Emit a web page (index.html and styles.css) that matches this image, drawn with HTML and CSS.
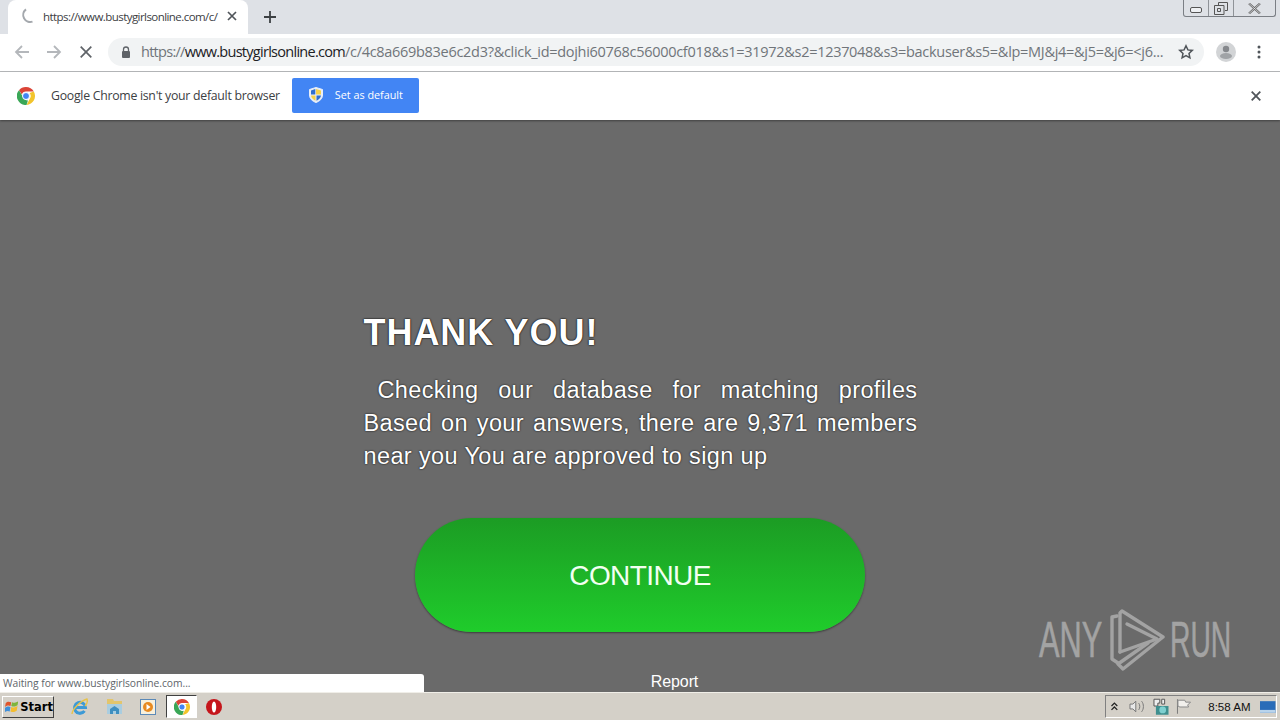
FILE: index.html
```html
<!DOCTYPE html>
<html lang="en">
<head>
<meta charset="utf-8">
<title>Thank you</title>
<link rel="stylesheet" href="styles.css">
</head>
<body>
<div class="screen">
  <header class="tabstrip">
    <div class="tab">
      <svg class="spinner" width="16" height="16" viewBox="0 0 16 16"><path d="M12.5 13.6A7 7 0 0 1 6 1.4" fill="none" stroke="#a4a8ad" stroke-width="2"/></svg>
      <span class="tab-title">https://www.bustygirlsonline.com/c/</span>
      <svg class="tab-close" width="10" height="10" viewBox="0 0 10 10"><path d="M1 1l8 8M9 1l-8 8" stroke="#50555a" stroke-width="1.7"/></svg>
    </div>
    <svg class="new-tab" width="12" height="12" viewBox="0 0 12 12"><path d="M6 0v12M0 6h12" stroke="#3c4043" stroke-width="1.8"/></svg>
    <div class="win-buttons">
      <span class="win-btn win-min"><svg width="12" height="6" viewBox="0 0 12 6"><rect x="0.5" y="0.5" width="11" height="5" rx="1.5" fill="#eef0f3" stroke="#555"/></svg></span>
      <span class="win-btn win-max"><svg width="14" height="13" viewBox="0 0 14 13"><path d="M4.5 3V.5h9v8H11M.5 3.500h9.500v9H.5zM3.500 6.500h3v3h-3z" fill="none" stroke="#555"/></svg></span>
      <span class="win-btn win-close"><svg width="13" height="11" viewBox="0 0 13 11"><path d="M1 .5l11 10M12 .5l-11 10" stroke="#666" stroke-width="2.200"/><path d="M1 .5l11 10M12 .5l-11 10" stroke="#eef0f3" stroke-width=".7"/></svg></span>
    </div>
  </header>

  <nav class="toolbar">
    <svg class="nav-icon nav-back" width="16" height="14" viewBox="0 0 16 14"><path d="M15 7H2M8 1L2 7l6 6" fill="none" stroke="#b4b7bb" stroke-width="1.800"/></svg>
    <svg class="nav-icon nav-fwd" width="16" height="14" viewBox="0 0 16 14"><path d="M1 7h13M8 1l6 6-6 6" fill="none" stroke="#b4b7bb" stroke-width="1.800"/></svg>
    <svg class="nav-icon nav-stop" width="12" height="12" viewBox="0 0 12 12"><path d="M.7.700l10.600 10.600M11.300.700L.7 11.300" stroke="#5f6368" stroke-width="1.700"/></svg>
    <div class="omnibox">
      <svg class="lock" width="10" height="12" viewBox="0 0 10 12"><path d="M2.500 5V3.500a2.500 2.500 0 0 1 5 0V5" fill="none" stroke="#5f6368" stroke-width="1.300"/><rect x="1" y="5" width="8" height="7" rx="1" fill="#5f6368"/></svg>
      <span class="url"><span class="url-scheme">https://</span><span class="url-host">www.bustygirlsonline.com</span><span class="url-dim">/c/4c8a669b83e6c2d3?&amp;click_id=dojhi60768c56000cf018&amp;s1=31972&amp;s2=1237048&amp;s3=backuser&amp;s5=&amp;lp=MJ&amp;j4=&amp;j5=&amp;j6=&lt;j6...</span></span>
      <svg class="star" width="16" height="16" viewBox="0 0 16 16"><path d="M8 1.800l1.900 4.100 4.400.5-3.300 3 .9 4.400L8 11.600l-3.900 2.200.9-4.400-3.300-3 4.400-.5z" fill="none" stroke="#50555a" stroke-width="1.500"/></svg>
    </div>
    <svg class="avatar" width="20" height="20" viewBox="0 0 20 20"><circle cx="10" cy="10" r="10" fill="#d2d4d6"/><circle cx="10" cy="7" r="3.200" fill="#85888c"/><ellipse cx="10" cy="14" rx="6" ry="3" fill="#a0a3a6"/></svg>
    <svg class="menu" width="4" height="14" viewBox="0 0 4 14"><circle cx="2" cy="2" r="1.500" fill="#50555a"/><circle cx="2" cy="7" r="1.500" fill="#50555a"/><circle cx="2" cy="12" r="1.500" fill="#50555a"/></svg>
  </nav>

  <section class="infobar">
    <svg class="chrome-logo" width="18" height="18" viewBox="0 0 18 18">
      <path d="M9 0a9 9 0 0 1 7.800 4.500H9a4.500 4.500 0 0 0-4.200 3L2 3.200A9 9 0 0 1 9 0z" fill="#db4437"/>
      <path d="M16.800 4.500A9 9 0 0 1 9.500 18l3.400-6.500A4.500 4.500 0 0 0 12.500 6z" fill="#f2c42c"/>
      <path d="M2 3.200l3.800 6.600A4.500 4.500 0 0 0 11 13.300L9.500 18A9 9 0 0 1 2 3.200z" fill="#3aa757"/>
      <circle cx="9" cy="9" r="3.500" fill="#4285f4" stroke="#fff" stroke-width="1"/>
    </svg>
    <span class="info-text">Google Chrome isn't your default browser</span>
    <button class="default-btn">
      <svg width="14" height="16" viewBox="0 0 14 16"><path d="M7 .5l6.500 2V8c0 3.500-2.500 6-6.500 7.500C3 14 .5 11.500.5 8V2.500z" fill="#e8eef8" stroke="#e8eef8"/><path d="M7 2v5.500h5V3.500z" fill="#f6d24a"/><path d="M2 8.500h4.500v5.200C4 12.500 2.300 11 2 8.500z" fill="#f6d24a"/><path d="M6.300 2L2 3.500v4h4.300z" fill="#2f6fd0"/><path d="M7.500 8.500H12c-.3 2.500-2 4-4.500 5.200z" fill="#2f6fd0"/></svg>
      <span>Set as default</span>
    </button>
    <svg class="info-close" width="10" height="10" viewBox="0 0 10 10"><path d="M.7.700l8.600 8.600M9.300.700L.7 9.300" stroke="#50555a" stroke-width="1.800"/></svg>
  </section>

  <main class="page">
    <div class="copy">
      <h1 class="title">THANK YOU!</h1>
      <p class="lead">Checking our database for matching profiles Based on your answers, there are 9,371 members near you You are approved to sign up</p>
    </div>
    <a class="cta">CONTINUE</a>
    <a class="report">Report</a>

    <div class="status">Waiting for www.bustygirlsonline.com...</div>
    <div class="watermark">
      <span class="wm-any">ANY</span>
      <svg width="55" height="62" viewBox="5 5 55 62" fill="none" stroke="#a3a3a3" stroke-width="3.400" stroke-linejoin="round" stroke-linecap="round">
        <path d="M12 12L7 13V55L13 59"/>
        <path d="M15 48V9L17 7L58 33L18 65L13 60L43 39"/>
        <path d="M22 20L52 35L15 48"/>
      </svg>
      <span class="wm-run">RUN</span>
    </div>
  </main>

  <footer class="taskbar">
    <button class="start">
      <svg width="17" height="15" viewBox="0 0 17 15"><path d="M1 3C3 1 5 1 8 2L7 7C5 6 3 6 0 8z" fill="#e0552b"/><path d="M9 2c3 1 5 1 8-1l-1 5c-3 2-5 2-8 1z" fill="#7fb53b"/><path d="M0 9c3-2 5-2 7-1l-1 6c-2-1-4-1-7 1z" fill="#3f8fd9"/><path d="M8 8c3 1 5 1 8-1l-1 6c-3 2-5 2-8 1z" fill="#f4bd2f"/></svg>
      <span>Start</span>
    </button>
    <div class="quick">
      <svg class="q-ie" width="18" height="18" viewBox="0 0 18 18"><path d="M4 9.500h10.500A5.500 5.500 0 1 0 13.500 13" fill="none" stroke="#3d9ad6" stroke-width="3"/><path d="M4.500 13c1 2.500 5 3 8.500.5" fill="none" stroke="#3d9ad6" stroke-width="2.500"/><path d="M1 16C1 12 9 3 16 1c1 3-1 6-2 7" fill="none" stroke="#e8c34a" stroke-width="1.400"/></svg>
      <svg class="q-folder" width="17" height="17" viewBox="0 0 17 17"><path d="M1 1h6l1 2h8v13H1z" fill="#e3c56c"/><path d="M1 6h15v10H1z" fill="#a9cde0"/><path d="M4 16v-5l4.500-3 4.500 3v5h-3v-3H7v3z" fill="#3f8fc0"/></svg>
      <svg class="q-media" width="16" height="16" viewBox="0 0 16 16"><rect x=".5" y=".5" width="15" height="15" fill="#f8f0dc" stroke="#5b89b8"/><circle cx="8" cy="8" r="5" fill="#e88a20"/><path d="M6.500 5l4 3-4 3z" fill="#fff"/></svg>
      <span class="q-active"><svg width="16" height="16" viewBox="0 0 18 18">
        <path d="M9 0a9 9 0 0 1 7.800 4.500H9a4.500 4.500 0 0 0-4.200 3L2 3.200A9 9 0 0 1 9 0z" fill="#db4437"/>
        <path d="M16.800 4.500A9 9 0 0 1 9.500 18l3.400-6.500A4.500 4.500 0 0 0 12.500 6z" fill="#f2c42c"/>
        <path d="M2 3.200l3.800 6.600A4.500 4.500 0 0 0 11 13.300L9.500 18A9 9 0 0 1 2 3.200z" fill="#3aa757"/>
        <circle cx="9" cy="9" r="3.500" fill="#4285f4" stroke="#fff"/></svg></span>
      <svg class="q-opera" width="16" height="16" viewBox="0 0 16 16"><circle cx="8" cy="8" r="8" fill="#c5151b"/><ellipse cx="8" cy="8" rx="2.200" ry="5.500" fill="#fff"/></svg>
    </div>
    <div class="tray">
      <svg width="7" height="9" viewBox="0 0 7 9"><path d="M.5 4l3-3 3 3M.5 8l3-3 3 3" fill="none" stroke="#222" stroke-width="1.300"/></svg>
      <svg class="t-sound" width="16" height="15" viewBox="0 0 16 15"><path d="M1 5h3l3-3v11l-3-3H1z" fill="#e8e8e8" stroke="#777"/><path d="M10 4c1.500 2 1.500 5 0 7M13 2c2.500 3 2.500 8 0 11" fill="none" stroke="#777"/></svg>
      <svg class="t-net" width="16" height="17" viewBox="0 0 16 17"><path d="M1 1h6v4H5v3H1zM9 1h3v5H9z" fill="#eee" stroke="#555"/><rect x="3" y="8" width="13" height="9" fill="#3f8f8f"/><circle cx="10" cy="12" r="3.500" fill="#7fd0d0"/></svg>
      <svg class="t-flag" width="16" height="15" viewBox="0 0 16 15"><path d="M1.500 0v15" stroke="#777"/><path d="M2 1h7l1 2h5l-3 3 1 2H4L2 7z" fill="#f2f0ec" stroke="#888"/></svg>
      <span class="clock">8:58 AM</span>
      <svg class="t-desk" width="16" height="12" viewBox="0 0 16 12"><rect width="16" height="12" fill="#2a6cb8"/><rect y="9" width="16" height="3" fill="#b9d4ec"/></svg>
    </div>
  </footer>
</div>
</body>
</html>
```

FILE: styles.css
```css
* { box-sizing: border-box; }
html, body { margin: 0; padding: 0; }
body { font-family: "Liberation Sans", Arial, sans-serif; overflow: hidden; }

.screen { width: 1280px; height: 720px; display: flex; flex-direction: column; position: relative; overflow: hidden; }

/* tab strip */
.tabstrip { height: 34px; flex: none; background: #dee1e6; display: flex; align-items: flex-start; position: relative; }
.tab { width: 240px; height: 34px; margin-left: 8px; padding: 0 0 2px 12px; background: #fff; border-radius: 8px 8px 0 0; display: flex; align-items: center; }
.spinner { flex: none; }
.tab-title { margin-left: 7px; width: 175px; font-family: "Open Sans", "Liberation Sans", sans-serif; font-size: 11.500px; letter-spacing: -0.56px; color: #3c4043; white-space: nowrap; }
.tab-close { margin-left: 9px; flex: none; }
.new-tab { margin: 11px 0 0 16px; flex: none; }
.win-buttons { margin-left: auto; margin-right: 4px; display: flex; height: 17px; border: 1px solid #7b7f85; border-top: none; border-radius: 0 0 3px 3px; }
.win-btn { display: flex; align-items: center; justify-content: center; height: 16px; }
.win-min { width: 25px; border-right: 1px solid #8f9398; padding-top: 3px; }
.win-max { width: 25px; border-right: 1px solid #8f9398; }
.win-close { width: 41px; }

/* toolbar */
.toolbar { height: 38px; flex: none; background: #fff; border-bottom: 1px solid #b8babc; display: flex; align-items: center; padding: 0 0 2px 14px; }
.nav-back { flex: none; }
.nav-fwd { flex: none; margin-left: 16px; }
.nav-stop { flex: none; margin-left: 18px; }
.omnibox { margin-left: 16px; width: 1096px; height: 28px; background: #f1f3f4; border-radius: 14px; display: flex; align-items: center; padding-left: 13px; flex: none; }
.lock { flex: none; }
.url { margin-left: 10px; width: 1024px; flex: none; font-family: "Open Sans", "Liberation Sans", sans-serif; font-size: 14.500px; white-space: nowrap; }
.url-scheme { color: #70757a; letter-spacing: -0.72px; }
.url-dim { color: #70757a; letter-spacing: -0.295px; }
.url-host { color: #202124; letter-spacing: -0.72px; }
.star { flex: none; margin-left: 13px; }
.avatar { flex: none; margin-left: 12px; }
.menu { flex: none; margin-left: 21px; }

/* info bar */
.infobar { height: 48px; flex: none; background: #fff; display: flex; align-items: center; padding-left: 17px; position: relative; box-shadow: 0 1px 2px rgba(0,0,0,.4); z-index: 1; }
.chrome-logo { flex: none; }
.info-text { margin: 0 0 2px 16px; font-family: "Open Sans", "Liberation Sans", sans-serif; font-size: 12.300px; letter-spacing: -0.275px; color: #3c4043; white-space: nowrap; }
.default-btn { margin: 0 0 2px 12px; width: 127px; height: 35px; background: #4285f4; border: none; border-radius: 2px; display: flex; align-items: center; padding: 0 0 0 17px; color: #fff; font-family: "Open Sans", "Liberation Sans", sans-serif; font-size: 10.800px; }
.default-btn span { margin: 0 0 2px 12px; }
.info-close { margin-left: auto; margin-right: 19px; flex: none; }

/* page */
.page { flex: 1; background: #6a6a6a; display: flex; flex-direction: column; align-items: center; position: relative; padding-top: 191px; }
.copy { width: 554px; margin-left: 1px; color: #fff; }
.title { margin: 0; font-size: 36px; line-height: 44px; font-weight: 700; letter-spacing: .95px; color: #fff; text-shadow: 0 0 2px #000, 0 0 1px #000; }
.lead { margin: 19px 0 0; font-size: 23.500px; line-height: 33px; letter-spacing: .37px; text-align: justify; text-indent: 14px; color: #fff; text-shadow: 0 0 2px #000; }
.cta { margin-top: 45px; padding-top: 1px; width: 450px; height: 114px; border-radius: 57px; background: linear-gradient(#1c9c24, #1fcc2b); box-shadow: 0 1px 2px rgba(0,0,0,.45); display: flex; align-items: center; justify-content: center; color: #f2fff2; font-size: 28px; letter-spacing: -.6px; }
.report { margin: 40px 0 0 69px; font-size: 16px; line-height: 20px; letter-spacing: -.1px; color: #fff; }

.status { position: absolute; left: 0; bottom: 0; width: 424px; height: 18px; background: #fff; border-radius: 0 3px 0 0; padding-left: 3px; font-family: "Open Sans", "Liberation Sans", sans-serif; font-size: 10.300px; line-height: 19px; letter-spacing: -.05px; color: #60656a; }

.watermark { position: absolute; right: 49px; bottom: 21px; display: flex; align-items: center; color: #a3a3a3; font-size: 50px; line-height: 62px; -webkit-text-stroke: .6px #a3a3a3; }
.wm-any, .wm-run { display: block; transform-origin: left center; white-space: nowrap; }
.wm-any { width: 63px; margin-right: 8px; transform: scaleX(.615); }
.wm-run { width: 61px; margin-left: 5px; transform: scaleX(.565); }

/* taskbar */
.taskbar { height: 28px; flex: none; background: #d4d0c8; border-top: 1px solid #f0eee8; display: flex; align-items: center; padding-left: 2px; position: relative; }
.start { width: 52px; height: 22px; padding: 0 0 0 2px; display: flex; align-items: center; background: #d4d0c8; border: 1px solid; border-color: #fff #404040 #404040 #fff; font-family: "DejaVu Sans", sans-serif; font-size: 11.500px; font-weight: 700; color: #000; flex: none; }
.start span { margin-left: 2px; }
.quick { display: flex; align-items: center; margin-left: 17px; }
.q-folder { margin-left: 17px; }
.q-media { margin-left: 17px; }
.q-active { margin-left: 10px; width: 31px; height: 23px; background: #fff; border: 1px solid; border-color: #404040 #fff #fff #404040; display: flex; align-items: center; justify-content: center; }
.q-opera { margin-left: 9px; }
.tray { margin-left: auto; margin-right: 3px; width: 172px; height: 23px; border: 1px solid; border-color: #808080 #fff #fff #808080; display: flex; align-items: center; padding-left: 5px; }
.t-sound { margin-left: 11px; }
.t-net { margin-left: 9px; }
.t-flag { margin-left: 7px; }
.clock { margin-left: 17px; font-family: "Liberation Sans", sans-serif; font-size: 11.500px; color: #111; white-space: nowrap; }
.t-desk { margin-left: 10px; }
```
